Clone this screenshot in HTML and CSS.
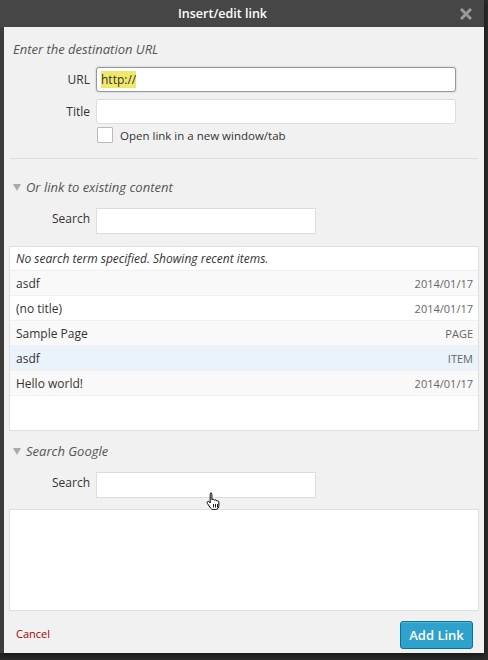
FILE: index.html
```html
<!DOCTYPE html>
<html>
<head>
<meta charset="utf-8">
<link rel="stylesheet" href="styles.css">
</head>
<body>
<div class="dialog">
  <div class="titlebar">
    <span class="title">Insert/edit link</span>
    <svg class="close" width="12" height="12" viewBox="0 0 12 12"><path d="M2 2L10 10M10 2L2 10" stroke="#9a9a9a" stroke-width="3" stroke-linecap="square"/></svg>
  </div>
  <div class="panel">
    <p class="heading">Enter the destination URL</p>
    <div class="field">
      <label class="lbl">URL</label>
      <div class="input wide focus"><span class="sel">http://</span></div>
    </div>
    <div class="field">
      <label class="lbl">Title</label>
      <div class="input wide"></div>
    </div>
    <div class="check-row">
      <span class="checkbox"></span>
      <span class="check-text">Open link in a new window/tab</span>
    </div>
    <div class="sep"></div>
    <p class="toggle"><span class="tri"></span>Or link to existing content</p>
    <div class="field search-field">
      <label class="lbl raised">Search</label>
      <div class="input narrow"></div>
    </div>
    <div class="results">
      <div class="row note">No search term specified. Showing recent items.</div>
      <div class="row alt"><span>asdf</span><span class="meta">2014/01/17</span></div>
      <div class="row"><span>(no title)</span><span class="meta">2014/01/17</span></div>
      <div class="row alt"><span>Sample Page</span><span class="meta">PAGE</span></div>
      <div class="row hover"><span>asdf</span><span class="meta">ITEM</span></div>
      <div class="row alt"><span>Hello world!</span><span class="meta">2014/01/17</span></div>
    </div>
    <p class="toggle second"><span class="tri"></span>Search Google</p>
    <div class="field search-field">
      <label class="lbl raised">Search</label>
      <div class="input narrow"></div>
    </div>
    <div class="results google"></div>
    <div class="footer">
      <a class="cancel">Cancel</a>
      <button class="primary">Add Link</button>
    </div>
  </div>
  <svg class="cursor" width="16" height="19" viewBox="0 0 16 19">
    <path d="M4.5 1.2c.8 0 1.4.6 1.4 1.4v5.2c.3-.4.8-.6 1.3-.5.6.1 1 .5 1.1 1 .3-.3.8-.5 1.3-.4.6.1 1 .6 1.1 1.1.3-.2.7-.3 1.1-.2.7.2 1.1.8 1.1 1.5v3.4c0 2-1.3 3.8-3.4 3.8H7.2c-1.2 0-2-.6-2.7-1.5L1.3 11.3c-.4-.6-.3-1.4.3-1.8.6-.4 1.3-.3 1.7.3l.9 1.2V2.6c0-.8.5-1.4 1.3-1.4z" fill="#fff" stroke="#000" stroke-width="1"/>
    <path d="M7.5 12v3.5M9.5 12v3.5M11.5 12v3.5" stroke="#000" stroke-width="0.9"/>
  </svg>
</div>
</body>
</html>
```
FILE: styles.css
```css
html, body {
  margin: 0;
  padding: 0;
}
body {
  background: #2c2c2c;
  width: 488px;
  height: 660px;
  overflow: hidden;
  font-family: "Open Sans", "Noto Sans", sans-serif;
}
.dialog {
  position: relative;
  width: 484px;
  height: 653px;
  background: #3d3d3d;
  box-shadow: 0 2px 6px rgba(0,0,0,0.6);
}
.titlebar {
  height: 27px;
  background: #464646;
  display: flex;
  align-items: center;
  position: relative;
}
.title {
  color: #fff;
  font-weight: 600;
  font-size: 12.5px;
  margin-left: 178px;
  line-height: 27px;
}
.close {
  position: absolute;
  right: 12px;
  top: 8px;
}
.panel {
  margin-left: 4px;
  width: 480px;
  height: 626px;
  background: #f1f1f1;
  padding-top: 13px;
  box-sizing: border-box;
  color: #333;
}
.heading {
  margin: 0 0 9px 9px;
  font-style: italic;
  font-size: 13px;
  line-height: 18px;
  color: #555;
}
.field {
  display: flex;
  align-items: center;
  margin-bottom: 7px;
}
.lbl {
  width: 86px;
  text-align: right;
  padding-right: 6px;
  font-size: 12px;
  color: #333;
}
.lbl.raised {
  margin-bottom: 5px;
}
.input {
  height: 25px;
  box-sizing: border-box;
  background: #fff;
  border: 1px solid #ddd;
  border-radius: 3px;
  display: flex;
  align-items: center;
  padding-left: 4px;
  font-size: 12px;
  color: #333;
}
.input.wide { width: 360px; }
.input.focus {
  border-color: #999;
  box-shadow: 0 0 2px rgba(0,0,0,0.25);
}
.sel {
  background: #f0e86a;
  line-height: 17px;
}
.check-row {
  display: flex;
  align-items: center;
  margin: -4px 0 0 93px;
  height: 16px;
}
.checkbox {
  width: 16px;
  height: 16px;
  box-sizing: border-box;
  border: 1px solid #bbb;
  background: #fff;
  border-radius: 1px;
}
.check-text {
  margin-left: 7px;
  font-size: 11.5px;
  color: #333;
}
.sep {
  margin: 15px 0 0 6px;
  width: 468px;
  height: 1px;
  background: #ddd;
}
.toggle {
  margin: 19px 0 0 9px;
  font-style: italic;
  font-size: 13px;
  line-height: 18px;
  color: #555;
  display: flex;
  align-items: center;
}
.toggle.second { margin-top: 11px; }
.tri {
  width: 0;
  height: 0;
  border-left: 4px solid transparent;
  border-right: 4px solid transparent;
  border-top: 7px solid #aaa;
  margin-right: 5px;
  margin-top: 1px;
}
.search-field {
  margin: 12px 0 0 0;
}
.input.narrow {
  width: 220px;
  height: 26px;
  border-radius: 0;
}
.results {
  margin: 12px 0 0 5px;
  width: 470px;
  height: 185px;
  box-sizing: border-box;
  background: #fff;
  border: 1px solid #dfdfdf;
}
.results.google {
  margin-top: 11px;
  height: 102px;
}
.row {
  height: 25px;
  box-sizing: border-box;
  border-bottom: 1px solid #f1f1f1;
  display: flex;
  align-items: center;
  justify-content: space-between;
  padding: 0 5px 0 6px;
  font-size: 12px;
  color: #333;
}
.row.note {
  height: 24px;
  font-style: italic;
  font-size: 12px;
}
.row.alt { background: #f9f9f9; }
.row.hover { background: #eaf2fa; }
.meta {
  font-size: 11px;
  color: #666;
}
.footer {
  margin-top: 10px;
  display: flex;
  align-items: center;
  justify-content: space-between;
  padding: 0 11px 0 12px;
}
.cancel {
  color: #a00;
  font-size: 11px;
  margin-bottom: 3px;
}
.primary {
  height: 28px;
  width: 73px;
  padding: 0;
  font-family: "Open Sans", sans-serif;
  font-size: 13px;
  font-weight: 600;
  color: #fff;
  background: #2ea2cc;
  border: 1px solid #0074a2;
  border-radius: 3px;
  box-shadow: inset 0 1px 0 rgba(120,200,230,0.5);
}
.cursor {
  position: absolute;
  left: 206px;
  top: 492px;
}
```
